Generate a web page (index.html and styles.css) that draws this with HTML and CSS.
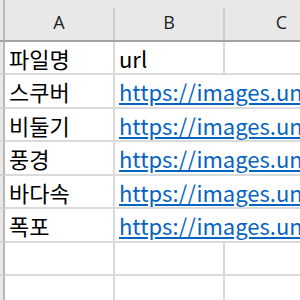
FILE: index.html
```html
<!DOCTYPE html>
<html>
<head>
	<meta charset="utf-8">
	<title>Sheet1</title>
	<link rel="stylesheet" href="styles.css">
</head>
<body>
	<div class="sheet">
		<div class="head">
			<div class="corner"></div>
			<div class="colname">A</div>
			<div class="colname">B</div>
			<div class="colname">C</div>
		</div>
		<div class="rows">
			<div class="rowname"></div><div class="cell">파일명</div><div class="cell">url</div><div class="cell"></div>
			<div class="rowname"></div><div class="cell">스쿠버</div><div class="cell wide"><a href="#">https://images.unsplash.com/photo-1</a></div>
			<div class="rowname"></div><div class="cell">비둘기</div><div class="cell wide"><a href="#">https://images.unsplash.com/photo-2</a></div>
			<div class="rowname"></div><div class="cell">풍경</div><div class="cell wide"><a href="#">https://images.unsplash.com/photo-3</a></div>
			<div class="rowname"></div><div class="cell">바다속</div><div class="cell wide"><a href="#">https://images.unsplash.com/photo-4</a></div>
			<div class="rowname"></div><div class="cell">폭포</div><div class="cell wide"><a href="#">https://images.unsplash.com/photo-5</a></div>
			<div class="rowname"></div><div class="cell"></div><div class="cell"></div><div class="cell"></div>
			<div class="rowname"></div><div class="cell"></div><div class="cell"></div><div class="cell"></div>
		</div>
	</div>
</body>
</html>
```

FILE: styles.css
```css
*{
	box-sizing: border-box;
}
body{
	margin: 0;
	background: #fff;
	overflow: hidden;
	font-family: "Noto Sans CJK KR", "Noto Sans", sans-serif;
}
.sheet{
	width: 340px;
}

/* column letters */
.head{
	display: flex;
	height: 42px;
	background: #e8e8e8;
	border-bottom: 2px solid #a3a3a3;
}
.corner{
	width: 5px;
	border-right: 2px solid #b8b8b8;
}
.colname{
	width: 110px;
	margin-top: 8px;
	border-right: 2px solid #cdcdcd;
	text-align: center;
	font-family: "Open Sans", sans-serif;
	font-size: 18px;
	line-height: 28px;
	color: #1e1e1e;
}
.colname:last-child{
	width: 115px;
}

/* cells */
.rows{
	display: grid;
	grid-template-columns: 5px 110px 110px 115px;
	grid-template-rows: 33px 34px 33px 34px 33px 34px 33px 34px;
}
.rowname{
	background: #e8e8e8;
	border-right: 2px solid #b8b8b8;
	border-bottom: 2px solid #d6d6d6;
}
.cell{
	border-right: 2px solid #dadada;
	border-bottom: 2px solid #dadada;
	padding: 1px 0 0 4px;
	font-size: 22px;
	line-height: 30px;
	color: #000;
	white-space: nowrap;
	overflow: hidden;
}
.cell.wide{
	grid-column: span 2;
	border-right: none;
}
.cell a{
	color: #0563c1;
	text-decoration: underline;
	text-decoration-thickness: 2px;
	text-underline-offset: 2px;
}
```
